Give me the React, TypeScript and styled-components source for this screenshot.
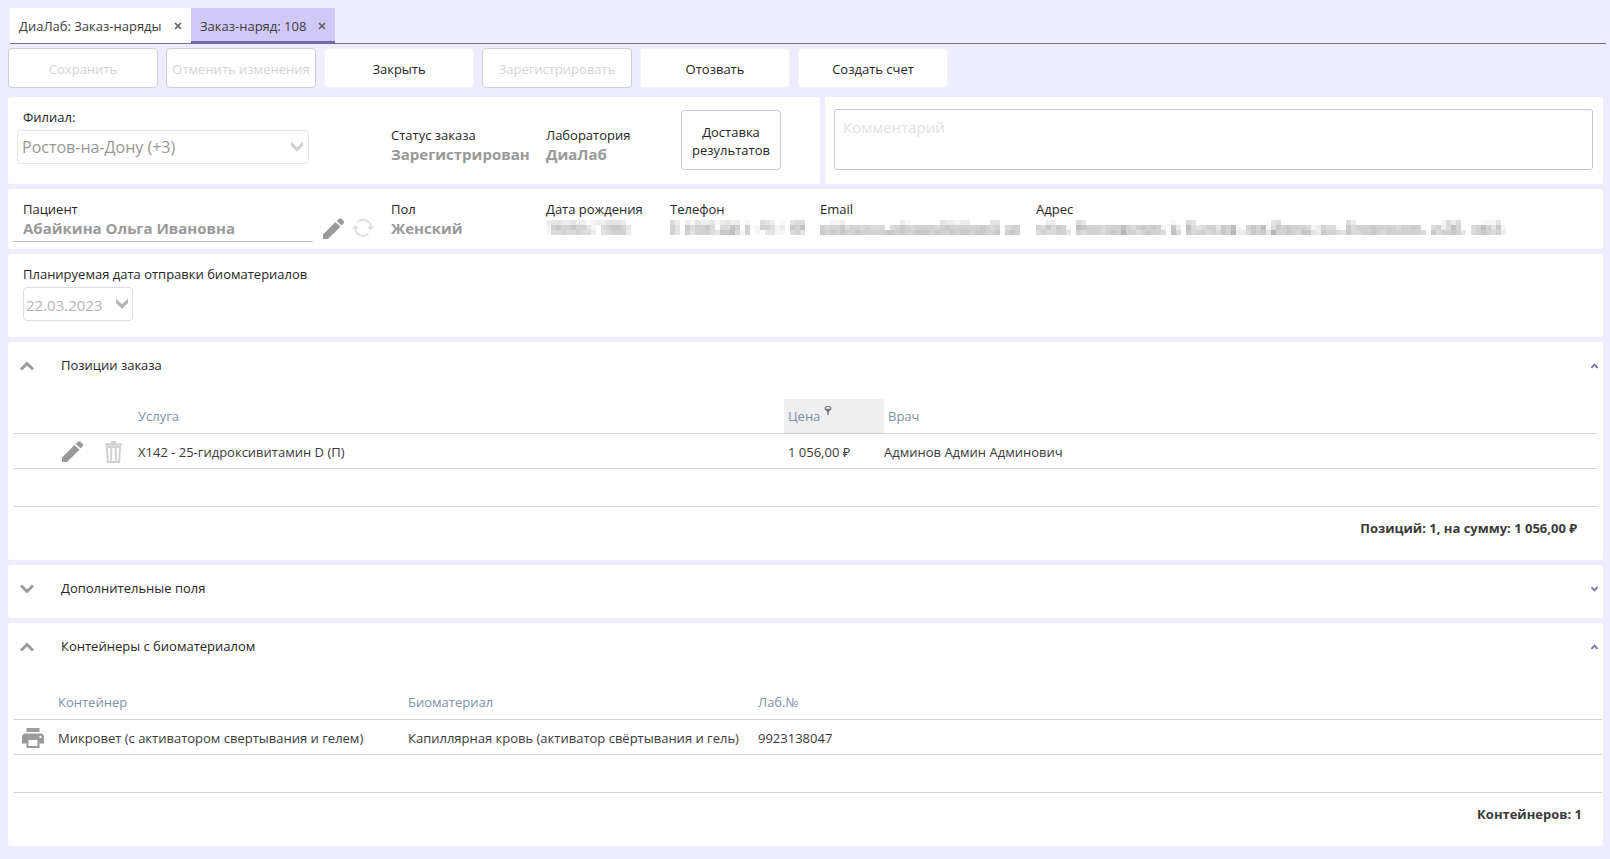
import React, { useState } from 'react';
import styled, { createGlobalStyle } from 'styled-components';

const GlobalStyle = createGlobalStyle`
  *, *::before, *::after { box-sizing: border-box; }
  body {
    margin: 0;
    background: #eeecff;
    color: #262626;
    font: 13px/20px 'Open Sans', 'Noto Sans', sans-serif;
  }
  button, input, select, textarea { font: inherit; color: inherit; margin: 0; }
`;

const Page = styled.div`
  padding: 8px 7px 13px 8px;
`;

const Tabs = styled.nav`
  display: flex;
  height: 36px;
  margin: 0 -3px 4px 2px;
  border-bottom: 1px solid #7568ab;
`;

const Tab = styled.div<{ $active?: boolean }>`
  display: flex;
  align-items: center;
  justify-content: space-between;
  width: ${(p) => (p.$active ? 144 : 181)}px;
  padding: 1px 9px 0;
  color: #3c3c3c;
  background: ${(p) => (p.$active ? '#d0c9f8' : '#fff')};
  box-shadow: ${(p) => (p.$active ? 'inset 0 -2px #7568ab' : 'none')};
`;

const TabLink = styled.a`
  color: inherit;
  text-decoration: none;
  white-space: nowrap;
`;

const IconButton = styled.button`
  display: inline-flex;
  align-items: center;
  justify-content: center;
  flex: none;
  padding: 0;
  border: 0;
  background: none;
  svg { display: block; }
`;

const Toolbar = styled.div`
  display: flex;
  gap: 8px;
  margin-bottom: 9px;
`;

const ToolButton = styled.button`
  width: 150px;
  height: 40px;
  padding: 2px 0 0;
  border: 1px solid #f3f2fb;
  border-radius: 4px;
  background: #fff;
  white-space: nowrap;
  &:disabled { color: #d4d4d4; border-color: #d0d0d0; }
`;

const Stack = styled.main`
  display: flex;
  flex-direction: column;
  gap: 5px;
`;

const TopRow = styled.div`
  display: flex;
  gap: 5px;
`;

const Card = styled.section`
  background: #fff;
  border-radius: 3px;
`;

const OrderCard = styled(Card)`
  display: grid;
  grid-template-columns: 374px 155px 135px 100px;
  align-items: start;
  width: 812px;
  height: 87px;
  padding: 10px 0 0 9px;
`;

const CommentCard = styled(Card)`
  flex: 1;
  padding: 12px 10px 0 9px;
`;

const Comment = styled.textarea`
  display: block;
  width: 100%;
  height: 61px;
  padding: 7px 8px;
  border: 1px solid #c6c6c6;
  border-radius: 3px;
  font-size: 15px;
  resize: none;
  outline: none;
  &::placeholder { color: #e2e2e2; opacity: 1; }
`;

const FieldLabel = styled.label`
  display: block;
  padding-left: 6px;
`;

const SelectBox = styled.div`
  display: grid;
  align-items: center;
  width: 292px;
  margin-top: 3px;
  > * { grid-area: 1 / 1; }
  svg { justify-self: end; margin-right: 5px; pointer-events: none; }
`;

const Select = styled.select`
  appearance: none;
  width: 100%;
  height: 34px;
  padding: 0 4px;
  border: 1px solid #e6e6e6;
  border-radius: 4px;
  background: #fff;
  font-size: 16px;
  &:disabled { color: #979797; opacity: 1; }
`;

const Fact = styled.div<{ $low?: boolean }>`
  padding-top: ${(p) => (p.$low ? 18 : 0)}px;
  white-space: nowrap;
`;

const Value = styled.div`
  color: #999;
  font-size: 15px;
  font-weight: 700;
  line-height: 18px;
`;

const DeliveryButton = styled.button`
  width: 100px;
  height: 60px;
  margin-top: 3px;
  padding: 2px 0 0;
  border: 1px solid #cacaca;
  border-radius: 4px;
  background: #fff;
  line-height: 18px;
`;

const PatientCard = styled(Card)`
  display: grid;
  grid-template-columns: 300px 78px 155px 124px 150px 216px 1fr;
  height: 60px;
  padding: 10px 0 0 5px;
`;

const PatientName = styled(Fact)`
  height: 43px;
  padding-left: 10px;
  border-bottom: 1px solid #bdbdbd;
`;

const PatientActions = styled.div`
  display: flex;
  gap: 7px;
  align-items: flex-start;
  padding: 19px 0 0 10px;
`;

const DateCard = styled(Card)`
  height: 83px;
  padding: 10px 15px 0;
`;

const DateLabel = styled.label`
  display: block;
`;

const DateBox = styled.div`
  display: flex;
  align-items: center;
  width: 110px;
  height: 34px;
  margin-top: 3px;
  padding: 0 3px 0 2px;
  border: 1px solid #dedede;
  border-radius: 4px;
`;

const DateInput = styled.input`
  flex: 1;
  min-width: 0;
  padding: 2px 0 0;
  border: 0;
  background: none;
  font-size: 15px;
  &:disabled { color: #b4b4b4; }
`;

const Section = styled(Card)<{ $open: boolean }>`
  padding: 14px 0 ${(p) => (p.$open ? 10 : 19)}px;
`;

const SectionHead = styled.div`
  display: flex;
  align-items: center;
  height: 20px;
  padding: 0 5px 0 12px;
`;

const SectionTitle = styled.h2`
  flex: 1;
  margin: 0 0 0 27px;
  padding-bottom: 2px;
  font-size: 13px;
  font-weight: 400;
`;

const Table = styled.table<{ $inset: number; $gap: number }>`
  width: calc(100% - 6px - ${(p) => p.$inset}px);
  margin: ${(p) => p.$gap}px 0 0 6px;
  border-collapse: separate;
  border-spacing: 0;
  table-layout: fixed;
  color: #3a3a3a;
  white-space: nowrap;
`;

const Head = styled.th<{ $marked?: boolean }>`
  height: 35px;
  padding: 0 4px;
  border-bottom: 1px solid #d2d2d2;
  color: #8090a8;
  font-weight: 400;
  text-align: left;
  background: ${(p) => (p.$marked ? '#efefef' : 'none')};
  svg { margin-left: 4px; vertical-align: 6px; }
`;

const Cell = styled.td<{ $tall?: boolean; $flush?: boolean }>`
  height: ${(p) => (p.$tall ? 38 : 35)}px;
  padding: ${(p) => (p.$flush ? '1px 0 0' : '1px 4px 0')};
  border-bottom: 1px solid #d2d2d2;
`;

const RowActions = styled.div<{ $start: number }>`
  display: flex;
  align-items: center;
  gap: 21px;
  padding-left: ${(p) => p.$start}px;
`;

const Total = styled.td`
  height: 43px;
  padding: 0 20px 2px 0;
  font-weight: 700;
  text-align: right;
`;

const MosaicImage = styled.svg`
  display: block;
  margin-top: 1px;
`;

const CELL = 5;

/* Masked personal data: each digit is the darkness of one square. */
const masks = {
  birth: ['23322322012233320', '15655655310456653', '14454454420345552'],
  phone: ['420213223123220100432010344', '530645564044650501554120657', '530535554366741501033110453'],
  email: [
    '0011200000000000210000003221220000330000',
    '5455645545444045654555545655555565450455',
    '6565655655555665655666565565665665560565',
  ],
  address: [
    '0022000' + '0' + '430000000000000000' + '0' + '10' + '0' + '430000000000' + '00000' + '340000000' + '000000' + '4200000000000000' + '0' + '0014240' + '0' + '0011130',
    '5464651' + '0' + '765554555754565651' + '0' + '62' + '0' + '743455365710' + '56571' + '465655541' + '254410' + '6455565555455650' + '0' + '4524750' + '0' + '4575361',
    '4544553' + '0' + '545554565855456554' + '0' + '74' + '0' + '645545465822' + '46563' + '855654663' + '265543' + '6445565455555554' + '0' + '6455653' + '0' + '4565452',
  ],
};

const Mosaic = ({ rows, label }: { rows: string[]; label: string }) => {
  const width = rows[0].length * CELL;
  const height = rows.length * CELL;
  return (
    <MosaicImage width={width} height={height} viewBox={`0 0 ${width} ${height}`} role="img" aria-label={label} shapeRendering="crispEdges">
      {rows.flatMap((row, y) =>
        [...row].map((d, x) => {
          const g = 255 - Number(d) * 9;
          return d === '0' ? null : (
            <rect key={`${x}-${y}`} x={x * CELL} y={y * CELL} width={CELL} height={CELL} fill={`rgb(${g},${g},${g})`} />
          );
        }),
      )}
    </MosaicImage>
  );
};

const Pencil = () => (
  <svg width="22" height="22" viewBox="0 0 22 22" fill="#9a9a9a" aria-hidden="true">
    <path d="M0 16.500 L12.500 4 L17.500 8.700 L5 21 H0 Z M13.800 2.900 L16 .7 Q17.300 -.3 18.500 .8 L20.600 2.900 Q21.700 4 20.700 5.300 L18.600 7.500 Z" />
  </svg>
);

const Refresh = () => (
  <svg width="22" height="20" viewBox="0 0 22 20" fill="none" stroke="#dcdcdc" strokeWidth="1.700" aria-hidden="true">
    <path d="M5 4.500 A8 8 0 0 1 19 9 M16.500 15.500 A8 8 0 0 1 3 10" />
    <path d="M15.500 8.500 H22 L18.800 12.500 Z M0 10.500 H6.500 L3.200 6.500 Z" fill="#dcdcdc" stroke="none" />
  </svg>
);

const Trash = () => (
  <svg width="17" height="22" viewBox="0 0 17 22" aria-hidden="true">
    <path d="M6 1.200 H11 M0 3.500 H17" stroke="#d2d2d2" strokeWidth="2.400" />
    <path d="M2 6 H15 L14.200 21 H2.800 Z M6.200 6 V21 M10.800 6 V21" fill="none" stroke="#d2d2d2" strokeWidth="2" />
  </svg>
);

const Printer = () => (
  <svg width="22" height="20" viewBox="0 0 22 20" fill="#9a9a9a" aria-hidden="true">
    <path d="M4.500 0 H17.500 V4 H4.500 Z" />
    <path fillRule="evenodd" d="M3.500 5.500 H18.500 Q22 5.500 22 9 V15.500 H17.500 V20 H4.500 V15.500 H0 V9 Q0 5.500 3.500 5.500 Z M6.500 12 V18 H15.500 V12 Z M17.500 8 H19.500 V10 H17.500 Z" />
  </svg>
);

const Arrow = ({ color }: { color: string }) => (
  <svg width="14" height="12" viewBox="0 0 14 12" fill={color} aria-hidden="true">
    <path d="M1 .8 L7 6.300 L13 .8 V5 L7 10.800 L1 5 Z" />
  </svg>
);

const Chevron = ({ up }: { up: boolean }) => (
  <svg width="14" height="10" viewBox="0 0 14 10" fill="none" stroke="#9a9a9a" strokeWidth="2.800" aria-hidden="true">
    <path d={up ? 'M1 8.500 L7 2.500 L13 8.500' : 'M1 1.500 L7 7.500 L13 1.500'} />
  </svg>
);

const SmallChevron = ({ up }: { up: boolean }) => (
  <svg width="7" height="6" viewBox="0 0 7 6" fill="none" stroke="#7c6fb0" strokeWidth="1.800" aria-hidden="true">
    <path d={up ? 'M.4 5 L3.500 1.600 L6.600 5' : 'M.4 1 L3.500 4.400 L6.600 1'} />
  </svg>
);

const Cross = () => (
  <svg width="8" height="8" viewBox="0 0 8 8" stroke="#5c5c5c" strokeWidth="1.600" aria-hidden="true">
    <path d="M1 1 L7 7 M7 1 L1 7" />
  </svg>
);

const Filter = () => (
  <svg width="8" height="9" viewBox="0 0 8 9" fill="none" stroke="#6a6a6a" aria-hidden="true">
    <ellipse cx="4" cy="2" rx="3" ry="1.500" />
    <path d="M1 2.500 L4 5.500 L7 2.500 M4 4 V9" strokeWidth="1.300" />
  </svg>
);

const toolbar = [
  { label: 'Сохранить', disabled: true },
  { label: 'Отменить изменения', disabled: true },
  { label: 'Закрыть' },
  { label: 'Зарегистрировать', disabled: true },
  { label: 'Отозвать' },
  { label: 'Создать счет' },
];

type CollapsibleProps = { title: string; initial: boolean; children?: React.ReactNode };

function Collapsible({ title, initial, children }: CollapsibleProps) {
  const [open, setOpen] = useState(initial);
  const toggle = () => setOpen(!open);
  return (
    <Section $open={open}>
      <SectionHead>
        <IconButton type="button" onClick={toggle} aria-expanded={open} aria-label={title}>
          <Chevron up={open} />
        </IconButton>
        <SectionTitle>{title}</SectionTitle>
        <IconButton type="button" onClick={toggle} aria-expanded={open} aria-label={title}>
          <SmallChevron up={open} />
        </IconButton>
      </SectionHead>
      {open && children}
    </Section>
  );
}

export default function App() {
  return (
    <>
      <GlobalStyle />
      <Page>
        <Tabs>
          <Tab>
            <TabLink href="#orders">ДиаЛаб: Заказ-наряды</TabLink>
            <IconButton type="button" aria-label="Закрыть вкладку"><Cross /></IconButton>
          </Tab>
          <Tab $active>
            <TabLink href="#order-108">Заказ-наряд: 108</TabLink>
            <IconButton type="button" aria-label="Закрыть вкладку"><Cross /></IconButton>
          </Tab>
        </Tabs>
        <Toolbar>
          {toolbar.map((b) => (
            <ToolButton key={b.label} type="button" disabled={b.disabled}>{b.label}</ToolButton>
          ))}
        </Toolbar>
        <Stack>
          <TopRow>
            <OrderCard>
              <div>
                <FieldLabel htmlFor="branch">Филиал:</FieldLabel>
                <SelectBox>
                  <Select id="branch" disabled><option>Ростов-на-Дону (+3)</option></Select>
                  <Arrow color="#d0d0d0" />
                </SelectBox>
              </div>
              <Fact $low>Статус заказа<Value>Зарегистрирован</Value></Fact>
              <Fact $low>Лаборатория<Value>ДиаЛаб</Value></Fact>
              <DeliveryButton type="button">Доставка результатов</DeliveryButton>
            </OrderCard>
            <CommentCard>
              <Comment placeholder="Комментарий" aria-label="Комментарий" />
            </CommentCard>
          </TopRow>
          <PatientCard>
            <PatientName>Пациент<Value>Абайкина Ольга Ивановна</Value></PatientName>
            <PatientActions>
              <IconButton type="button" aria-label="Изменить"><Pencil /></IconButton>
              <IconButton type="button" disabled aria-label="Обновить"><Refresh /></IconButton>
            </PatientActions>
            <Fact>Пол<Value>Женский</Value></Fact>
            <Fact>Дата рождения<Mosaic rows={masks.birth} label="Дата скрыта" /></Fact>
            <Fact>Телефон<Mosaic rows={masks.phone} label="Телефон скрыт" /></Fact>
            <Fact>Email<Mosaic rows={masks.email} label="Email скрыт" /></Fact>
            <Fact>Адрес<Mosaic rows={masks.address} label="Адрес скрыт" /></Fact>
          </PatientCard>
          <DateCard>
            <DateLabel htmlFor="send-date">Планируемая дата отправки биоматериалов</DateLabel>
            <DateBox>
              <DateInput id="send-date" defaultValue="22.03.2023" disabled />
              <Arrow color="#b4b4b4" />
            </DateBox>
          </DateCard>
          <Collapsible title="Позиции заказа" initial>
            <Table $inset={6} $gap={23}>
              <colgroup>
                <col style={{ width: 120 }} /><col style={{ width: 650 }} /><col style={{ width: 100 }} /><col />
              </colgroup>
              <thead>
                <tr><Head /><Head>Услуга</Head><Head $marked>Цена<Filter /></Head><Head>Врач</Head></tr>
              </thead>
              <tbody>
                <tr>
                  <Cell $flush>
                    <RowActions $start={48}>
                      <IconButton type="button" aria-label="Изменить"><Pencil /></IconButton>
                      <IconButton type="button" disabled aria-label="Удалить"><Trash /></IconButton>
                    </RowActions>
                  </Cell>
                  <Cell>X142 - 25-гидроксивитамин D (П)</Cell>
                  <Cell>1 056,00 ₽</Cell>
                  <Cell $flush>Админов Админ Админович</Cell>
                </tr>
                <tr><Cell colSpan={4} $tall /></tr>
              </tbody>
              <tfoot><tr><Total colSpan={4}>Позиций: 1, на сумму: 1 056,00 ₽</Total></tr></tfoot>
            </Table>
          </Collapsible>
          <Collapsible title="Дополнительные поля" initial={false} />
          <Collapsible title="Контейнеры с биоматериалом" initial>
            <Table $inset={1} $gap={28}>
              <colgroup>
                <col style={{ width: 40 }} /><col style={{ width: 350 }} /><col style={{ width: 350 }} /><col />
              </colgroup>
              <thead>
                <tr><Head /><Head>Контейнер</Head><Head>Биоматериал</Head><Head>Лаб.№</Head></tr>
              </thead>
              <tbody>
                <tr>
                  <Cell $flush>
                    <RowActions $start={8}>
                      <IconButton type="button" aria-label="Печать"><Printer /></IconButton>
                    </RowActions>
                  </Cell>
                  <Cell>Микровет (с активатором свертывания и гелем)</Cell>
                  <Cell>Капиллярная кровь (активатор свёртывания и гель)</Cell>
                  <Cell>9923138047</Cell>
                </tr>
                <tr><Cell colSpan={4} $tall /></tr>
              </tbody>
              <tfoot><tr><Total colSpan={4}>Контейнеров: 1</Total></tr></tfoot>
            </Table>
          </Collapsible>
        </Stack>
      </Page>
    </>
  );
}
